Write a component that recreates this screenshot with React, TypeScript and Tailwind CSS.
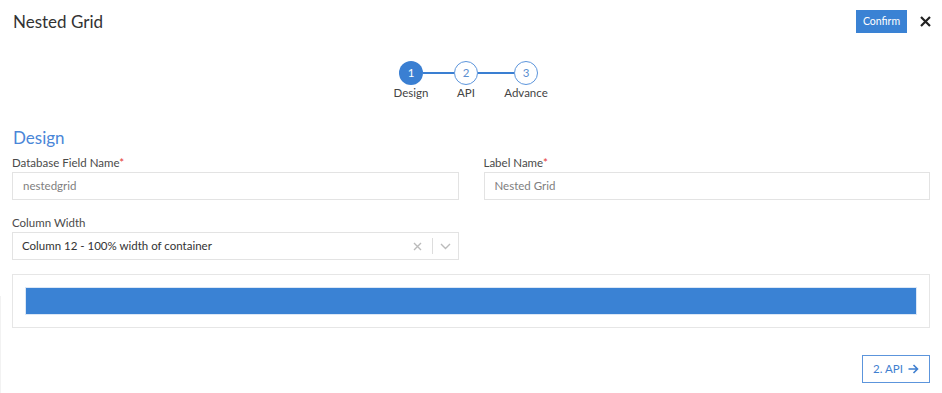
import React from "react";

function Step({ n, label, active }: { n: number; label: string; active?: boolean }) {
  return (
    <div className="flex w-[24px] flex-col items-center">
      <div
        className={
          active
            ? "flex h-[24px] w-[24px] items-center justify-center rounded-full bg-[#3a7fd2] text-[11.5px] text-white"
            : "flex h-[24px] w-[24px] items-center justify-center rounded-full border border-[#5c95dc] bg-white text-[11.5px] text-[#5c8fd0]"
        }
      >
        {n}
      </div>
      <div className="whitespace-nowrap text-[11.5px] leading-[16px] text-[#444]">{label}</div>
    </div>
  );
}

export default function App() {
  return (
    <div
      className="relative h-[393px] w-[942px] overflow-hidden bg-white"
      style={{ fontFamily: "Lato, 'Open Sans', sans-serif" }}
    >
      <div className="absolute bottom-0 left-0 top-[296px] w-px bg-[#f2f2f2]" />
      {/* header */}
      <div className="flex h-[44px] items-start justify-between pl-[13px] pr-[11px] pt-[10px]">
        <div className="text-[17px] leading-[24px] text-[#333]">Nested Grid</div>
        <div className="flex items-center">
          <button className="flex h-[23px] w-[51px] items-center justify-center bg-[#3a82d4] text-[10.5px] text-white">
            Confirm
          </button>
          <svg className="ml-[13px]" width="11" height="11" viewBox="0 0 11 11">
            <path d="M1 1 L10 10 M10 1 L1 10" stroke="#222" strokeWidth="2.2" />
          </svg>
        </div>
      </div>

      {/* stepper */}
      <div className="mt-[17px] flex justify-center pr-[5px]">
        <div className="flex items-start">
          <Step n={1} label="Design" active />
          <div className="mt-[11px] h-[2px] w-[31px] bg-[#3a7fd2]" />
          <Step n={2} label="API" />
          <div className="mt-[11px] h-[2px] w-[36px] bg-[#3a7fd2]" />
          <Step n={3} label="Advance" />
        </div>
      </div>

      <div className="px-[12px]">
        <div className="mt-[25px] h-[24px] pl-px text-[17px] leading-[24px] text-[#4a86d8]">Design</div>

        <div className="mt-[5px] grid grid-cols-2 gap-x-[25px]">
          <div>
            <div className="h-[16px] text-[11.5px] leading-[16px] text-[#4a4a4a]">
              Database Field Name<span className="text-[#e53935]">*</span>
            </div>
            <div className="mt-[1px] flex h-[28px] items-center border border-[#e3e3e3] pl-[10px] text-[11.5px] text-[#808080]">
              nestedgrid
            </div>
          </div>
          <div>
            <div className="h-[16px] text-[11.5px] leading-[16px] text-[#4a4a4a]">
              Label Name<span className="text-[#e53935]">*</span>
            </div>
            <div className="mt-[1px] flex h-[28px] items-center border border-[#e3e3e3] pl-[10px] text-[11.5px] text-[#808080]">
              Nested Grid
            </div>
          </div>
        </div>

        <div className="mt-[15px] h-[16px] text-[11.5px] leading-[16px] text-[#4a4a4a]">Column Width</div>
        <div className="mt-[1px] flex h-[28px] w-[447px] items-center border border-[#e3e3e3] pl-[9px] pr-[7px] text-[11.5px] text-[#333]">
          <span className="flex-1">Column 12 - 100% width of container</span>
          <svg width="9" height="9" viewBox="0 0 9 9" className="mr-[10px]">
            <path d="M1 1 L8 8 M8 1 L1 8" stroke="#bbb" strokeWidth="1.4" />
          </svg>
          <div className="h-[16px] w-px bg-[#ddd]" />
          <svg width="11" height="7" viewBox="0 0 11 7" className="ml-[7px]">
            <path d="M1 1 L5.5 5.5 L10 1" stroke="#bbb" strokeWidth="1.4" fill="none" />
          </svg>
        </div>

        <div className="mt-[14px] border border-[#e6e6e6] p-[13px]">
          <div className="h-[26px] bg-[#3a82d4] shadow-[0_0_0_1px_#dbe7f6]" />
        </div>

        <div className="mt-[27px] flex justify-end">
          <button className="flex h-[28px] w-[68px] items-center justify-center gap-[5px] border border-[#5c95dc] text-[11.5px] text-[#3f7fd0]">
            2. API
            <svg width="11" height="10" viewBox="0 0 11 10">
              <path d="M0.5 5 H9.5 M5.5 1 L9.5 5 L5.5 9" stroke="#3f7fd0" strokeWidth="1.6" fill="none" />
            </svg>
          </button>
        </div>
      </div>
    </div>
  );
}
